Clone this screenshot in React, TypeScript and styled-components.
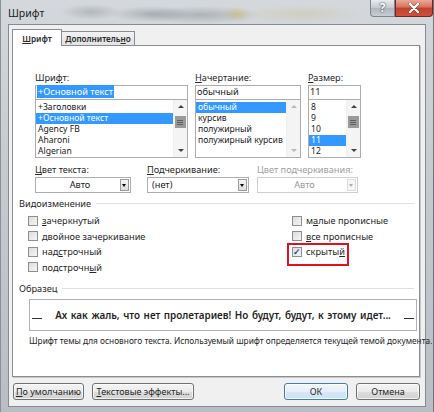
import styled, { createGlobalStyle } from "styled-components";

const GlobalStyle = createGlobalStyle`
  html, body { margin: 0; padding: 0; background: #c9ced3; }
  body { font-family: "Noto Sans", "Open Sans", sans-serif; }
  * { box-sizing: border-box; }
`;

const fontItems = ["+Заголовки", "+Основной текст", "Agency FB", "Aharoni", "Algerian"];
const styleItems = ["обычный", "курсив", "полужирный", "полужирный курсив"];
const sizeItems = ["8", "9", "10", "11", "12"];

const leftChecks = [
  { text: "зачеркнутый", key: 0 },
  { text: "двойное зачеркивание", key: -1 },
  { text: "надстрочный", key: 3 },
  { text: "подстрочный", key: 9 },
];
const rightChecks = [
  { text: "малые прописные", key: 1, checked: false },
  { text: "все прописные", key: 0, checked: false },
  { text: "скрытый", key: 6, checked: true },
];

const Mn = ({ text, at }: { text: string; at: number }) => {
  if (at < 0) return <>{text}</>;
  return (
    <>
      {text.slice(0, at)}
      <u>{text[at]}</u>
      {text.slice(at + 1)}
    </>
  );
};

const App = () => {
  return (
    <>
      <GlobalStyle />
      <Window>
        <TitleBar>
          <Title>Шрифт</Title>
          <Caption>
            <HelpBtn>?</HelpBtn>
            <CloseBtn>
              <svg width="12" height="10" viewBox="0 0 12 10">
                <path d="M2 1 L10 9 M10 1 L2 9" stroke="#5a1a10" strokeWidth="3.4" strokeLinecap="round" opacity="0.5" />
                <path d="M2 1 L10 9 M10 1 L2 9" stroke="#fff" strokeWidth="2.4" strokeLinecap="round" />
              </svg>
            </CloseBtn>
          </Caption>
        </TitleBar>
        <Client>
          <Tabs>
            <Tab $active>
              <Mn text="Шрифт" at={0} />
            </Tab>
            <Tab>
              <Mn text="Дополнительно" at={11} />
            </Tab>
          </Tabs>
          <Panel>
            <FontRow>
              <Column $w={153}>
                <Label>
                  <Mn text="Шрифт:" at={3} />
                </Label>
                <TextInput>
                  <Selected>+Основной текст</Selected>
                </TextInput>
                <ListBox>
                  <Items>
                    {fontItems.map((item, i) => (
                      <Item key={item} $sel={i === 1}>
                        {item}
                      </Item>
                    ))}
                  </Items>
                  <ScrollBar $thumb />
                </ListBox>
              </Column>
              <Column $w={106}>
                <Label>
                  <Mn text="Начертание:" at={0} />
                </Label>
                <TextInput>обычный</TextInput>
                <ListBox>
                  <Items>
                    {styleItems.map((item, i) => (
                      <Item key={item} $sel={i === 0}>
                        {item}
                      </Item>
                    ))}
                  </Items>
                  <ScrollBar $dim />
                </ListBox>
              </Column>
              <Column $w={53}>
                <Label>
                  <Mn text="Размер:" at={0} />
                </Label>
                <TextInput>11</TextInput>
                <ListBox>
                  <Items>
                    {sizeItems.map((item, i) => (
                      <Item key={item} $sel={i === 3}>
                        {item}
                      </Item>
                    ))}
                  </Items>
                  <ScrollBar $thumb />
                </ListBox>
              </Column>
            </FontRow>

            <SelectRow>
              <Column $w={96}>
                <Label>
                  <Mn text="Цвет текста:" at={0} />
                </Label>
                <Select>
                  <SelectValue $center>Авто</SelectValue>
                  <DropBtn />
                </Select>
              </Column>
              <Column $w={102}>
                <Label>
                  <Mn text="Подчеркивание:" at={0} />
                </Label>
                <Select>
                  <SelectValue>(нет)</SelectValue>
                  <DropBtn />
                </Select>
              </Column>
              <Column $w={101}>
                <Label $disabled>Цвет подчеркивания:</Label>
                <Select $disabled>
                  <SelectValue $center>Авто</SelectValue>
                  <DropBtn $disabled />
                </Select>
              </Column>
            </SelectRow>

            <GroupTitle>
              <span>Видоизменение</span>
            </GroupTitle>
            <Checks>
              <CheckColumn>
                {leftChecks.map((c) => (
                  <CheckRow key={c.text}>
                    <Box />
                    <span>
                      <Mn text={c.text} at={c.key} />
                    </span>
                  </CheckRow>
                ))}
              </CheckColumn>
              <CheckColumn>
                {rightChecks.map((c) => (
                  <CheckRow key={c.text} $marked={c.checked}>
                    <Box>{c.checked && "✓"}</Box>
                    <span>
                      <Mn text={c.text} at={c.key} />
                    </span>
                  </CheckRow>
                ))}
              </CheckColumn>
            </Checks>

            <GroupTitle $sample>
              <span>Образец</span>
            </GroupTitle>
            <Sample>
              <Dash />
              <SampleText>Ах как жаль, что нет пролетариев! Но будут, будут, к этому идет...</SampleText>
              <Dash />
            </Sample>
            <Hint>Шрифт темы для основного текста. Используемый шрифт определяется текущей темой документа.</Hint>
          </Panel>

          <Buttons>
            <Button $w={71}>
              <Mn text="По умолчанию" at={0} />
            </Button>
            <Button $w={102}>
              <Mn text="Текстовые эффекты..." at={0} />
            </Button>
            <Spacer />
            <Button $w={64} $default>
              ОК
            </Button>
            <Button $w={64}>Отмена</Button>
          </Buttons>
        </Client>
      </Window>
    </>
  );
};

export default App;

const Window = styled.div`
  width: 434px;
  height: 412px;
  display: flex;
  flex-direction: column;
  padding: 0 7px 5px 7px;
  background:
    radial-gradient(ellipse 30px 8px at 90px 12px, rgba(120, 126, 134, 0.35), transparent),
    radial-gradient(ellipse 40px 8px at 150px 14px, rgba(100, 106, 114, 0.35), transparent),
    radial-gradient(ellipse 60px 9px at 200px 15px, rgba(90, 96, 104, 0.3), transparent),
    radial-gradient(ellipse 14px 8px at 236px 14px, rgba(220, 190, 90, 0.45), transparent),
    radial-gradient(ellipse 60px 9px at 300px 14px, rgba(200, 180, 110, 0.25), transparent),
    linear-gradient(180deg, #d4d8dc 0%, #c6cbd0 40%, #b8bec4 100%);
  border-left: 1px solid #8a9096;
  border-right: 1px solid #6e747a;
`;

const TitleBar = styled.div`
  height: 24px;
  display: flex;
  align-items: flex-start;
`;

const Title = styled.div`
  margin-top: 7px;
  font-size: 10.5px;
  line-height: 13px;
  color: #1b1b1b;
`;

const Caption = styled.div`
  margin-left: auto;
  margin-right: -7px;
  display: flex;
  height: 17px;
`;

const HelpBtn = styled.div`
  width: 25px;
  height: 17px;
  border: 1px solid #7d858d;
  border-top: none;
  border-radius: 0 0 0 4px;
  background: linear-gradient(180deg, #e8ebee 0%, #c3c9cf 50%, #aeb6be 51%, #c7cdd3 100%);
  color: #fff;
  font-size: 12px;
  font-weight: 700;
  line-height: 15px;
  text-align: center;
  text-shadow: 0 0 2px #3a4652, 0 0 1px #3a4652;
`;

const CloseBtn = styled.div`
  width: 38px;
  height: 17px;
  border: 1px solid #6b2a22;
  border-top: none;
  border-radius: 0 0 4px 0;
  background: linear-gradient(180deg, #e9a99a 0%, #d6705c 45%, #c2412c 50%, #d2503a 100%);
  display: flex;
  align-items: center;
  justify-content: center;
`;

const Client = styled.div`
  flex: 1;
  display: flex;
  flex-direction: column;
  background: #f0f0f0;
  border: 1px solid #848b93;
  padding: 0 5px 0 3px;
`;

const Tabs = styled.div`
  display: flex;
  align-items: flex-end;
  height: 21px;
  margin-bottom: -1px;
  position: relative;
  z-index: 1;
`;

const Tab = styled.div<{ $active?: boolean }>`
  height: ${(p) => (p.$active ? "17px" : "15px")};
  width: ${(p) => (p.$active ? "50px" : "74px")};
  margin-left: ${(p) => (p.$active ? "0" : "-1px")};
  border: 1px solid #898c95;
  border-bottom: ${(p) => (p.$active ? "none" : "1px solid #898c95")};
  background: ${(p) => (p.$active ? "#fff" : "linear-gradient(180deg, #f2f2f2, #e3e3e3)")};
  font-size: 8.2px;
  font-weight: 600;
  color: #2a2a2a;
  line-height: ${(p) => (p.$active ? "17px" : "13px")};
  text-align: center;
  white-space: nowrap;
`;

const Panel = styled.div`
  height: 332px;
  background: #fff;
  border: 1px solid #898c95;
  box-shadow: 1px 1px 0 #c7c7c7;
  display: flex;
  flex-direction: column;
  padding: 0 5px 0 6px;
`;

const FontRow = styled.div`
  display: flex;
  gap: 7px;
  margin-top: 26px;
  padding-left: 16px;
`;

const SelectRow = styled.div`
  display: flex;
  gap: 8px;
  margin-top: 6px;
  padding-left: 16px;

  & > div:first-child {
    margin-right: 8px;
  }
`;

const Column = styled.div<{ $w: number }>`
  width: ${(p) => p.$w}px;
  display: flex;
  flex-direction: column;
`;

const Label = styled.div<{ $disabled?: boolean }>`
  height: 12px;
  font-size: 9.2px;
  line-height: 12px;
  color: ${(p) => (p.$disabled ? "#a0a0a0" : "#262626")};
  margin-bottom: 1px;
  white-space: nowrap;
`;

const TextInput = styled.div`
  height: 14px;
  border: 1px solid #abadb3;
  border-bottom: none;
  padding: 0 1px;
  font-size: 9.2px;
  line-height: 12px;
  color: #1a1a1a;
`;

const Selected = styled.span`
  background: #3399ff;
  color: #fff;
  padding: 0 1px;
`;

const ListBox = styled.div`
  height: 59px;
  border: 1px solid #abadb3;
  display: flex;
  overflow: hidden;
`;

const Items = styled.div`
  flex: 1;
  padding-top: 2px;
  white-space: nowrap;
  overflow: hidden;
`;

const Item = styled.div<{ $sel?: boolean }>`
  height: 11px;
  font-size: 8.6px;
  line-height: 11px;
  padding-left: 2px;
  overflow: hidden;
  background: ${(p) => (p.$sel ? "#3399ff" : "transparent")};
  color: ${(p) => (p.$sel ? "#fff" : "#1a1a1a")};
`;

const ScrollBar = styled.div<{ $thumb?: boolean; $dim?: boolean }>`
  width: 14px;
  flex-shrink: 0;
  position: relative;
  background: #f4f4f4;
  border-left: 1px solid #f0f0f0;

  &::before,
  &::after {
    content: "";
    position: absolute;
    left: 4px;
    border-left: 3px solid transparent;
    border-right: 3px solid transparent;
  }
  &::before {
    top: 5px;
    border-bottom: 3px solid ${(p) => (p.$dim ? "#b8b8b8" : "#404040")};
  }
  &::after {
    bottom: 5px;
    border-top: 3px solid ${(p) => (p.$dim ? "#b8b8b8" : "#404040")};
  }

  ${(p) =>
    p.$thumb &&
    `
    background-image:
      linear-gradient(#606060, #606060),
      linear-gradient(#606060, #606060),
      linear-gradient(#606060, #606060),
      linear-gradient(#9a9a9a, #9a9a9a),
      linear-gradient(90deg, #eeeeee, #d6d6d6);
    background-size: 6px 1px, 6px 1px, 6px 1px, 11px 12px, 9px 10px;
    background-position: 3px 20px, 3px 22px, 3px 24px, 1px 16px, 2px 17px;
    background-repeat: no-repeat;
  `}
`;

const Select = styled.div<{ $disabled?: boolean }>`
  height: 16px;
  border: 1px solid ${(p) => (p.$disabled ? "#cfcfcf" : "#abadb3")};
  display: flex;
  align-items: center;
  color: ${(p) => (p.$disabled ? "#9a9a9a" : "#1a1a1a")};
  padding-right: 1px;
`;

const SelectValue = styled.div<{ $center?: boolean }>`
  flex: 1;
  font-size: 9.2px;
  line-height: 12px;
  text-align: ${(p) => (p.$center ? "center" : "left")};
  padding-left: 4px;
`;

const DropBtn = styled.div<{ $disabled?: boolean }>`
  width: 9px;
  height: 12px;
  border: 1px solid ${(p) => (p.$disabled ? "#dcdcdc" : "#9a9a9a")};
  background: ${(p) => (p.$disabled ? "#f6f6f6" : "linear-gradient(180deg, #f6f6f6, #dedede)")};
  position: relative;

  &::after {
    content: "";
    position: absolute;
    left: 1px;
    top: 4px;
    border-left: 2.5px solid transparent;
    border-right: 2.5px solid transparent;
    border-top: 3px solid ${(p) => (p.$disabled ? "#b0b0b0" : "#000")};
  }
`;

const GroupTitle = styled.div<{ $sample?: boolean }>`
  display: flex;
  align-items: center;
  gap: 5px;
  height: 12px;
  margin-top: ${(p) => (p.$sample ? "7px" : "4px")};
  font-size: 9.2px;
  color: #262626;

  &::after {
    content: "";
    flex: 1;
    height: 1px;
    background: #dcdfe3;
  }
`;

const Checks = styled.div`
  display: grid;
  grid-template-columns: 264px 1fr;
  margin-top: 4px;
  padding-left: 9px;
`;

const CheckColumn = styled.div`
  display: flex;
  flex-direction: column;
`;

const CheckRow = styled.div<{ $marked?: boolean }>`
  height: 15.5px;
  display: flex;
  align-items: center;
  gap: 4px;
  font-size: 9.2px;
  color: #262626;
  position: relative;
  white-space: nowrap;

  ${(p) =>
    p.$marked &&
    `
    &::after {
      content: "";
      position: absolute;
      left: -5px;
      top: -1px;
      width: 58px;
      height: 19px;
      border: 2px solid #e3101d;
    }
  `}
`;

const Box = styled.div`
  width: 10px;
  height: 10px;
  flex-shrink: 0;
  border: 1px solid #8e8f8f;
  background: linear-gradient(135deg, #dcdcdc, #f6f6f6);
  font-size: 9px;
  line-height: 8px;
  font-weight: 700;
  color: #2b4f99;
  text-align: center;
`;

const Sample = styled.div`
  margin: 5px 0 0 10px;
  width: 388px;
  height: 32px;
  border: 1px solid #aeb2b8;
  display: flex;
  align-items: center;
  padding: 0 2px;
`;

const Dash = styled.div`
  width: 10px;
  height: 1px;
  background: #333;
  margin-top: 6px;
`;

const SampleText = styled.div`
  flex: 1;
  text-align: center;
  font-size: 9.9px;
  font-weight: 600;
  color: #1f1f1f;
  word-spacing: 1px;
  white-space: nowrap;
`;

const Hint = styled.div`
  margin: 4px 0 0 10px;
  font-size: 8.3px;
  line-height: 11px;
  color: #262626;
  white-space: nowrap;
`;

const Buttons = styled.div`
  display: flex;
  align-items: center;
  gap: 8px;
  margin-top: 6px;
  padding-left: 1px;
`;

const Spacer = styled.div`
  flex: 1;
`;

const Button = styled.div<{ $w: number; $default?: boolean }>`
  width: ${(p) => p.$w}px;
  height: 17px;
  border: 1px solid ${(p) => (p.$default ? "#3c7fb1" : "#707070")};
  border-radius: 3px;
  background: ${(p) =>
    p.$default
      ? "linear-gradient(180deg, #f2f8fc 0%, #e4eff8 50%, #d6e7f5 51%, #cfe3f3 100%)"
      : "linear-gradient(180deg, #f4f4f4 0%, #ebebeb 50%, #dddddd 51%, #d1d1d1 100%)"};
  box-shadow: inset 0 0 0 1px rgba(255, 255, 255, 0.7);
  font-size: 9px;
  line-height: 15px;
  text-align: center;
  color: #262626;
  white-space: nowrap;
`;
